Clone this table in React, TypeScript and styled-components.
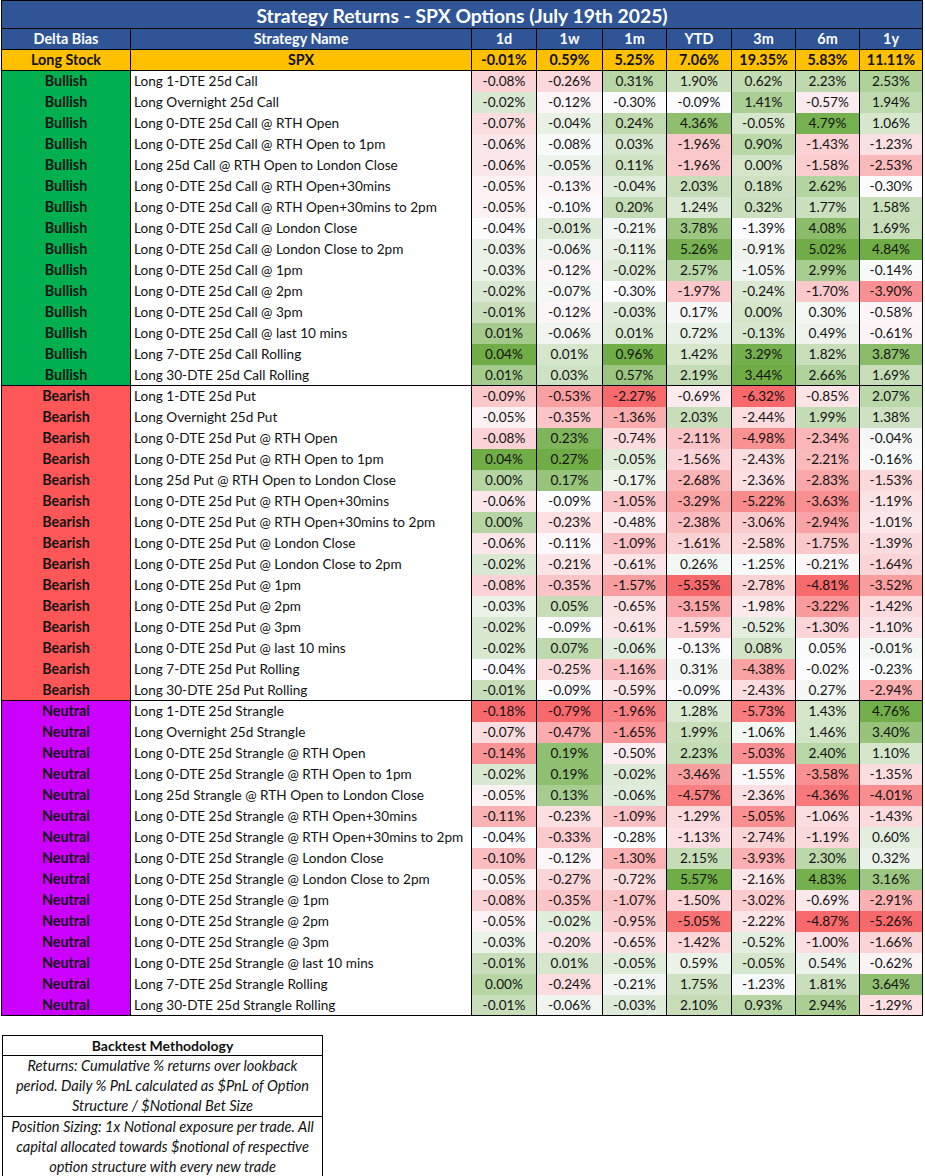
import React from "react";
import styled, { createGlobalStyle } from "styled-components";

const Global = createGlobalStyle`
  html, body { margin: 0; padding: 0; background: #ffffff; }
  body { font-family: Lato, "Liberation Sans", sans-serif; color: #111; }
`;

const FONT = `Lato, "Liberation Sans", sans-serif`;
const COL_W = [129, 341, 65, 66, 64, 65, 64, 64, 63];
const PERIODS = ["1d", "1w", "1m", "YTD", "3m", "6m", "1y"];

type Row = { name: string; v: number[] };
type Group = { bias: string; color: string; rows: Row[] };

const groups: Group[] = [
  {
    bias: "Bullish",
    color: "#00B050",
    rows: [
      { name: "Long 1-DTE 25d Call", v: [-0.08, -0.26, 0.31, 1.9, 0.62, 2.23, 2.53] },
      { name: "Long Overnight 25d Call", v: [-0.02, -0.12, -0.3, -0.09, 1.41, -0.57, 1.94] },
      { name: "Long 0-DTE 25d Call @ RTH Open", v: [-0.07, -0.04, 0.24, 4.36, -0.05, 4.79, 1.06] },
      { name: "Long 0-DTE 25d Call @ RTH Open to 1pm", v: [-0.06, -0.08, 0.03, -1.96, 0.9, -1.43, -1.23] },
      { name: "Long 25d Call @ RTH Open to London Close", v: [-0.06, -0.05, 0.11, -1.96, 0.0, -1.58, -2.53] },
      { name: "Long 0-DTE 25d Call @ RTH Open+30mins", v: [-0.05, -0.13, -0.04, 2.03, 0.18, 2.62, -0.3] },
      { name: "Long 0-DTE 25d Call @ RTH Open+30mins to 2pm", v: [-0.05, -0.1, 0.2, 1.24, 0.32, 1.77, 1.58] },
      { name: "Long 0-DTE 25d Call @ London Close", v: [-0.04, -0.01, -0.21, 3.78, -1.39, 4.08, 1.69] },
      { name: "Long 0-DTE 25d Call @ London Close to 2pm", v: [-0.03, -0.06, -0.11, 5.26, -0.91, 5.02, 4.84] },
      { name: "Long 0-DTE 25d Call @ 1pm", v: [-0.03, -0.12, -0.02, 2.57, -1.05, 2.99, -0.14] },
      { name: "Long 0-DTE 25d Call @ 2pm", v: [-0.02, -0.07, -0.3, -1.97, -0.24, -1.7, -3.9] },
      { name: "Long 0-DTE 25d Call @ 3pm", v: [-0.01, -0.12, -0.03, 0.17, 0.0, 0.3, -0.58] },
      { name: "Long 0-DTE 25d Call @ last 10 mins", v: [0.01, -0.06, 0.01, 0.72, -0.13, 0.49, -0.61] },
      { name: "Long 7-DTE 25d Call Rolling", v: [0.04, 0.01, 0.96, 1.42, 3.29, 1.82, 3.87] },
      { name: "Long 30-DTE 25d Call Rolling", v: [0.01, 0.03, 0.57, 2.19, 3.44, 2.66, 1.69] },
    ],
  },
  {
    bias: "Bearish",
    color: "#FF5757",
    rows: [
      { name: "Long 1-DTE 25d Put", v: [-0.09, -0.53, -2.27, -0.69, -6.32, -0.85, 2.07] },
      { name: "Long Overnight 25d Put", v: [-0.05, -0.35, -1.36, 2.03, -2.44, 1.99, 1.38] },
      { name: "Long 0-DTE 25d Put @ RTH Open", v: [-0.08, 0.23, -0.74, -2.11, -4.98, -2.34, -0.04] },
      { name: "Long 0-DTE 25d Put @ RTH Open to 1pm", v: [0.04, 0.27, -0.05, -1.56, -2.43, -2.21, -0.16] },
      { name: "Long 25d Put @ RTH Open to London Close", v: [0.0, 0.17, -0.17, -2.68, -2.36, -2.83, -1.53] },
      { name: "Long 0-DTE 25d Put @ RTH Open+30mins", v: [-0.06, -0.09, -1.05, -3.29, -5.22, -3.63, -1.19] },
      { name: "Long 0-DTE 25d Put @ RTH Open+30mins to 2pm", v: [0.0, -0.23, -0.48, -2.38, -3.06, -2.94, -1.01] },
      { name: "Long 0-DTE 25d Put @ London Close", v: [-0.06, -0.11, -1.09, -1.61, -2.58, -1.75, -1.39] },
      { name: "Long 0-DTE 25d Put @ London Close to 2pm", v: [-0.02, -0.21, -0.61, 0.26, -1.25, -0.21, -1.64] },
      { name: "Long 0-DTE 25d Put @ 1pm", v: [-0.08, -0.35, -1.57, -5.35, -2.78, -4.81, -3.52] },
      { name: "Long 0-DTE 25d Put @ 2pm", v: [-0.03, 0.05, -0.65, -3.15, -1.98, -3.22, -1.42] },
      { name: "Long 0-DTE 25d Put @ 3pm", v: [-0.02, -0.09, -0.61, -1.59, -0.52, -1.3, -1.1] },
      { name: "Long 0-DTE 25d Put @ last 10 mins", v: [-0.02, 0.07, -0.06, -0.13, 0.08, 0.05, -0.01] },
      { name: "Long 7-DTE 25d Put Rolling", v: [-0.04, -0.25, -1.16, 0.31, -4.38, -0.02, -0.23] },
      { name: "Long 30-DTE 25d Put Rolling", v: [-0.01, -0.09, -0.59, -0.09, -2.43, 0.27, -2.94] },
    ],
  },
  {
    bias: "Neutral",
    color: "#CC00FF",
    rows: [
      { name: "Long 1-DTE 25d Strangle", v: [-0.18, -0.79, -1.96, 1.28, -5.73, 1.43, 4.76] },
      { name: "Long Overnight 25d Strangle", v: [-0.07, -0.47, -1.65, 1.99, -1.06, 1.46, 3.4] },
      { name: "Long 0-DTE 25d Strangle @ RTH Open", v: [-0.14, 0.19, -0.5, 2.23, -5.03, 2.4, 1.1] },
      { name: "Long 0-DTE 25d Strangle @ RTH Open to 1pm", v: [-0.02, 0.19, -0.02, -3.46, -1.55, -3.58, -1.35] },
      { name: "Long 25d Strangle @ RTH Open to London Close", v: [-0.05, 0.13, -0.06, -4.57, -2.36, -4.36, -4.01] },
      { name: "Long 0-DTE 25d Strangle @ RTH Open+30mins", v: [-0.11, -0.23, -1.09, -1.29, -5.05, -1.06, -1.43] },
      { name: "Long 0-DTE 25d Strangle @ RTH Open+30mins to 2pm", v: [-0.04, -0.33, -0.28, -1.13, -2.74, -1.19, 0.6] },
      { name: "Long 0-DTE 25d Strangle @ London Close", v: [-0.1, -0.12, -1.3, 2.15, -3.93, 2.3, 0.32] },
      { name: "Long 0-DTE 25d Strangle @ London Close to 2pm", v: [-0.05, -0.27, -0.72, 5.57, -2.16, 4.83, 3.16] },
      { name: "Long 0-DTE 25d Strangle @ 1pm", v: [-0.08, -0.35, -1.07, -1.5, -3.02, -0.69, -2.91] },
      { name: "Long 0-DTE 25d Strangle @ 2pm", v: [-0.05, -0.02, -0.95, -5.05, -2.22, -4.87, -5.26] },
      { name: "Long 0-DTE 25d Strangle @ 3pm", v: [-0.03, -0.2, -0.65, -1.42, -0.52, -1.0, -1.66] },
      { name: "Long 0-DTE 25d Strangle @ last 10 mins", v: [-0.01, 0.01, -0.05, 0.59, -0.05, 0.54, -0.62] },
      { name: "Long 7-DTE 25d Strangle Rolling", v: [0.0, -0.24, -0.21, 1.75, -1.23, 1.81, 3.64] },
      { name: "Long 30-DTE 25d Strangle Rolling", v: [-0.01, -0.06, -0.03, 2.1, 0.93, 2.94, -1.29] },
    ],
  },
];

const spx = ["-0.01%", "0.59%", "5.25%", "7.06%", "19.35%", "5.83%", "11.11%"];

// Excel-style 3 colour scale (min red, 50th percentile white, max green), per column
const RED = [248, 105, 107];
const MID = [252, 252, 255];
const GREEN = [112, 173, 71];

function percentile(sorted: number[], p: number) {
  const idx = (sorted.length - 1) * p;
  const lo = Math.floor(idx);
  const hi = Math.ceil(idx);
  return sorted[lo] + (sorted[hi] - sorted[lo]) * (idx - lo);
}
function mix(a: number[], b: number[], t: number) {
  const c = a.map((x, i) => Math.round(x + (b[i] - x) * t));
  return `rgb(${c[0]}, ${c[1]}, ${c[2]})`;
}
const scales = PERIODS.map((_, ci) => {
  const vals = groups.flatMap((g) => g.rows.map((r) => r.v[ci])).sort((a, b) => a - b);
  return { min: vals[0], mid: percentile(vals, 0.5), max: vals[vals.length - 1] };
});
function colorFor(v: number, ci: number) {
  const { min, mid, max } = scales[ci];
  if (v <= mid) return mix(RED, MID, mid === min ? 1 : (v - min) / (mid - min));
  return mix(MID, GREEN, max === mid ? 0 : (v - mid) / (max - mid));
}

const Page = styled.div`
  padding: 0 0 0 1px;
  width: 924px;
`;

const Sheet = styled.div`
  display: grid;
  grid-template-columns: ${COL_W.map((w) => `${w}px`).join(" ")};
  width: max-content;
  border-left: 1px solid #000;
  border-top: 1px solid #000;
  font-family: ${FONT};
`;

const TitleCell = styled.div`
  grid-column: 1 / -1;
  height: 28px;
  box-sizing: border-box;
  background: #2f5597;
  border-right: 1px solid #000;
  border-bottom: 1px solid #000;
  color: #fff;
  font-weight: 700;
  font-size: 19.3px;
  display: flex;
  align-items: center;
  justify-content: center;
  padding-top: 1px;
`;

const Cell = styled.div<{ $bottom?: boolean; $align?: "left" | "center" }>`
  height: 21px;
  box-sizing: border-box;
  border-right: 1px solid #000;
  border-bottom: ${(p) => (p.$bottom ? "1px solid #000" : "none")};
  font-size: 13.6px;
  line-height: 20px;
  white-space: nowrap;
  overflow: hidden;
  text-align: ${(p) => p.$align ?? "center"};
  padding: ${(p) => (p.$align === "left" ? "0 0 0 3px" : "0")};
  color: #111;
`;

const HeadCell = styled(Cell)`
  background: #2f5597;
  color: #fff;
  font-weight: 700;
  font-size: 14.4px;
`;

const StockCell = styled(Cell)`
  background: #ffc000;
  font-weight: 700;
  font-size: 14.3px;
  color: #111;
`;

const BiasCell = styled(Cell)<{ $bg: string }>`
  background: ${(p) => p.$bg};
  font-weight: 700;
  font-size: 14.3px;
  color: #141414;
`;

const NameCell = styled(Cell)`
  background: #fff;
`;

const ValueCell = styled(Cell)``;

const Method = styled.div`
  margin: 19px 0 0 1px;
  width: 321px;
  box-sizing: border-box;
  border: 1px solid #000;
  font-family: ${FONT};
  font-size: 14.6px;
  color: #111;
`;

const MethodHead = styled.div`
  height: 20px;
  box-sizing: border-box;
  border-bottom: 1px solid #000;
  text-align: center;
  font-weight: 700;
  font-size: 14px;
  line-height: 19px;
`;

const MethodNote = styled.div<{ $last?: boolean }>`
  border-bottom: ${(p) => (p.$last ? "none" : "1px solid #000")};
  text-align: center;
  font-style: italic;
  line-height: 20px;
  white-space: nowrap;
`;

const fmt = (v: number) => `${v.toFixed(2)}%`;

export default function App() {
  return (
    <Page>
      <Global />
      <Sheet>
        <TitleCell>Strategy Returns - SPX Options (July 19th 2025)</TitleCell>
        <HeadCell $bottom>Delta Bias</HeadCell>
        <HeadCell $bottom>Strategy Name</HeadCell>
        {PERIODS.map((p) => (
          <HeadCell $bottom key={p}>
            {p}
          </HeadCell>
        ))}
        <StockCell $bottom>Long Stock</StockCell>
        <StockCell $bottom>SPX</StockCell>
        {spx.map((s, i) => (
          <StockCell $bottom key={i}>
            {s}
          </StockCell>
        ))}
        {groups.map((g) =>
          g.rows.map((r, ri) => {
            const last = ri === g.rows.length - 1;
            return (
              <React.Fragment key={r.name}>
                <BiasCell $bg={g.color} $bottom={last}>
                  {g.bias}
                </BiasCell>
                <NameCell $align="left" $bottom={last}>
                  {r.name}
                </NameCell>
                {r.v.map((v, ci) => (
                  <ValueCell key={ci} $bottom={last} style={{ background: colorFor(v, ci) }}>
                    {fmt(v)}
                  </ValueCell>
                ))}
              </React.Fragment>
            );
          })
        )}
      </Sheet>
      <Method>
        <MethodHead>Backtest Methodology</MethodHead>
        <MethodNote>
          Returns: Cumulative % returns over lookback
          <br />
          period. Daily % PnL calculated as $PnL of Option
          <br />
          Structure / $Notional Bet Size
        </MethodNote>
        <MethodNote $last>
          Position Sizing: 1x Notional exposure per trade. All
          <br />
          capital allocated towards $notional of respective
          <br />
          option structure with every new trade
        </MethodNote>
      </Method>
    </Page>
  );
}
